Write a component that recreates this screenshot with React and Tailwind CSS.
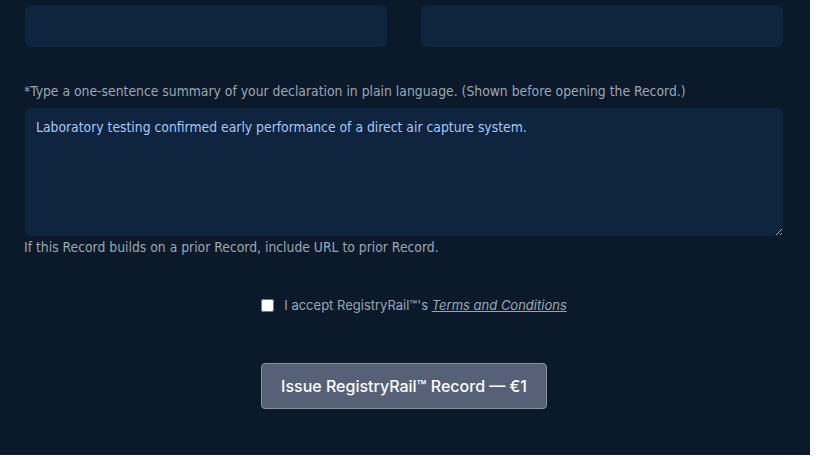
export default function App() {
  const narrow = { fontFamily: '"Liberation Sans Narrow", "DejaVu Sans Condensed", sans-serif' };
  return (
    <div className="w-[819px] h-[460px] bg-white">
      <div className="w-[810px] h-[455px] bg-[#0b1a2b] pt-[5px] pl-[25px] pr-[27px]">
        <div className="grid grid-cols-2 gap-[34px]">
          <div className="h-[42px] rounded-[6px] bg-[#0f243e]" />
          <div className="h-[42px] rounded-[6px] bg-[#0f243e]" />
        </div>
        <div className="mt-[34px] -ml-px text-[13.8px] leading-[20px] text-[#9ba6b3]" style={narrow}>
          *Type a one-sentence summary of your declaration in plain language. (Shown before opening the Record.)
        </div>
        <textarea
          className="mt-[7px] block w-full h-[128px] rounded-[6px] bg-[#0f243e] px-[11px] py-[9px] text-[13.8px] leading-[20px] text-[#a9c9f5] outline-none"
          style={narrow}
          defaultValue="Laboratory testing confirmed early performance of a direct air capture system."
        />
        <div className="mt-[1px] -ml-px text-[13.8px] leading-[20px] text-[#9ba6b3]" style={narrow}>
          If this Record builds on a prior Record, include URL to prior Record.
        </div>
        <div
          className="mt-[39px] pl-[20px] flex items-center justify-center gap-[10px] text-[13px] text-[#9ba6b3]"
          style={{ fontFamily: 'Inter, sans-serif' }}
        >
          <input type="checkbox" className="w-[13px] h-[13px]" />
          <span>
            I accept RegistryRail™'s{" "}
            <a className="italic underline">Terms and Conditions</a>
          </span>
        </div>
        <div className="mt-[47px] flex justify-center">
          <button
            className="h-[46px] px-[19px] rounded-[4px] bg-[#566178] border border-[#8891a1] text-white text-[16px] font-medium"
            style={{ fontFamily: 'Inter, sans-serif' }}
          >
            Issue RegistryRail™ Record — €1
          </button>
        </div>
      </div>
    </div>
  );
}
